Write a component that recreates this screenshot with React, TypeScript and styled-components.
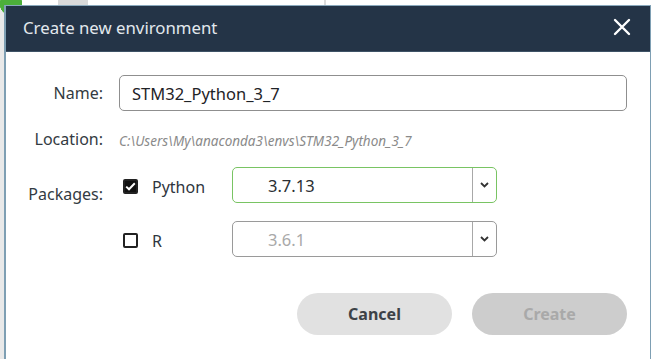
import React from "react";
import styled, { createGlobalStyle } from "styled-components";

const Global = createGlobalStyle`
  html, body { margin: 0; padding: 0; background: #ffffff; }
  body { font-family: "Noto Sans", "Open Sans", sans-serif; overflow: hidden; }
`;

const Backdrop = styled.div`
  width: 654px;
  height: 359px;
  box-sizing: border-box;
  padding: 5px 3px 0 4px;
  overflow: hidden;
  background:
    radial-gradient(circle at 11px 4px, #4caf3a 0 11px, transparent 11.5px),
    linear-gradient(#d9d9d9, #d9d9d9) 58px 0 / 30px 5px no-repeat,
    linear-gradient(#dcdcdc, #dcdcdc) 324px 0 / 2px 5px no-repeat,
    linear-gradient(#e9e9e9, #e9e9e9) 0 0 / 4px 100% no-repeat,
    #ffffff;
`;

const Dialog = styled.div`
  height: 100%;
  box-sizing: border-box;
  border-left: 2px solid #7e9fb3;
  border-right: 1px solid #7e9fb3;
  border-top: 1px solid #8aa9bd;
  background: #ffffff;
  display: flex;
  flex-direction: column;
`;

const Header = styled.div`
  height: 45px;
  background: #243447;
  display: flex;
  align-items: center;
  justify-content: space-between;
  padding: 0 18px 0 17px;
  border-bottom: 1px solid #3e5366;
`;

const Title = styled.span`
  color: #e2e8ed;
  font-size: 16.8px;
  line-height: 20px;
  margin-top: -1px;
`;

const CloseButton = styled.button`
  border: none;
  background: transparent;
  padding: 0;
  width: 20px;
  height: 20px;
  margin-top: -3px;
  display: flex;
  align-items: center;
  justify-content: center;
  cursor: pointer;
`;

const Body = styled.div`
  padding: 23px 23px 0 0;
  display: grid;
  grid-template-columns: 97px 1fr;
  column-gap: 16px;
  align-items: center;
`;

const Label = styled.div`
  text-align: right;
  font-size: 16px;
  line-height: 20px;
  color: #333b42;
`;

const TextInput = styled.div`
  height: 36px;
  box-sizing: border-box;
  border: 1px solid #8f8f8f;
  border-radius: 5px;
  display: flex;
  align-items: center;
  padding-left: 12px;
  font-size: 16.5px;
  color: #1f2327;
`;

const LocationText = styled.div`
  font-size: 13.5px;
  line-height: 20px;
  font-style: italic;
  color: #8a8a8a;
  margin-top: 20px;
  margin-bottom: 16px;
`;

const PackageRow = styled.div<{ $mb?: number }>`
  display: grid;
  grid-template-columns: 113px 265px;
  align-items: center;
  margin-bottom: ${(p) => p.$mb ?? 0}px;
`;

const PackageCheck = styled.label`
  display: flex;
  align-items: center;
  gap: 14px;
  padding-left: 4px;
  font-size: 16px;
  line-height: 20px;
  color: #2f3640;
  padding-top: 3px;
`;

const Box = styled.span<{ $checked?: boolean }>`
  width: 15px;
  height: 15px;
  flex: none;
  box-sizing: border-box;
  border-radius: 2px;
  border: 2px solid #222;
  background: ${(p) => (p.$checked ? "#111" : "#fff")};
  display: flex;
  align-items: center;
  justify-content: center;
`;

const Select = styled.div<{ $active?: boolean }>`
  height: 36px;
  box-sizing: border-box;
  border: 1px solid ${(p) => (p.$active ? "#79c463" : "#9a9a9a")};
  border-radius: 5px;
  display: flex;
  align-items: stretch;
  font-size: 16.5px;
  color: ${(p) => (p.$active ? "#2b2f33" : "#a9a9a9")};
`;

const SelectValue = styled.div`
  flex: 1;
  display: flex;
  align-items: center;
  padding-left: 35px;
`;

const SelectArrow = styled.div`
  width: 23px;
  border-left: 1px solid #a8a8a8;
  display: flex;
  align-items: center;
  justify-content: center;
`;

const Buttons = styled.div`
  grid-column: 1 / -1;
  display: flex;
  justify-content: flex-end;
  gap: 20px;
  margin-top: 36px;
`;

const Button = styled.button<{ $disabled?: boolean }>`
  width: 155px;
  height: 42px;
  border: none;
  border-radius: 21px;
  background: ${(p) => (p.$disabled ? "#cdcdcd" : "#e1e1e1")};
  color: ${(p) => (p.$disabled ? "#a9a9a9" : "#3d4247")};
  font-family: "Noto Sans", "Open Sans", sans-serif;
  font-weight: 700;
  font-size: 16px;
  cursor: pointer;
`;

const Chevron = () => (
  <svg width="9" height="6" viewBox="0 0 9 6">
    <path d="M1 1 L4.5 4.5 L8 1" fill="none" stroke="#333" strokeWidth="1.8" />
  </svg>
);

const Tick = () => (
  <svg width="11" height="9" viewBox="0 0 11 9">
    <path d="M1.2 4.6 L4 7.3 L9.8 1.3" fill="none" stroke="#fff" strokeWidth="2" />
  </svg>
);

export default function App() {
  return (
    <>
      <Global />
      <Backdrop>
        <Dialog>
          <Header>
            <Title>Create new environment</Title>
            <CloseButton aria-label="Close">
              <svg width="18" height="18" viewBox="0 0 18 18">
                <path d="M2 2 L16 16 M16 2 L2 16" stroke="#fff" strokeWidth="2.4" strokeLinecap="round" />
              </svg>
            </CloseButton>
          </Header>
          <Body>
            <Label>Name:</Label>
            <TextInput>STM32_Python_3_7</TextInput>

            <Label>Location:</Label>
            <LocationText>C:\Users\My\anaconda3\envs\STM32_Python_3_7</LocationText>

            <Label>Packages:</Label>
            <PackageRow $mb={18}>
              <PackageCheck>
                <Box $checked>
                  <Tick />
                </Box>
                Python
              </PackageCheck>
              <Select $active>
                <SelectValue>3.7.13</SelectValue>
                <SelectArrow>
                  <Chevron />
                </SelectArrow>
              </Select>
            </PackageRow>

            <div />
            <PackageRow>
              <PackageCheck>
                <Box />R
              </PackageCheck>
              <Select>
                <SelectValue>3.6.1</SelectValue>
                <SelectArrow>
                  <Chevron />
                </SelectArrow>
              </Select>
            </PackageRow>

            <Buttons>
              <Button>Cancel</Button>
              <Button $disabled>Create</Button>
            </Buttons>
          </Body>
        </Dialog>
      </Backdrop>
    </>
  );
}
